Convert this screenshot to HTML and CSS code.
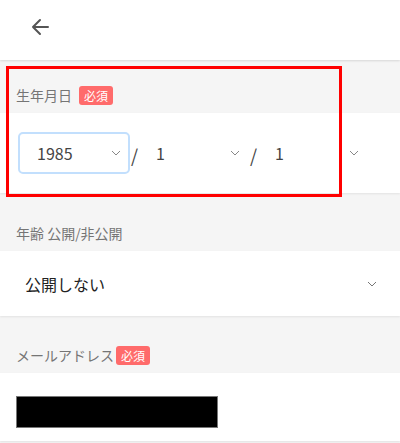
FILE: index.html
```html
<!DOCTYPE html>
<html lang="ja">
<head>
<meta charset="utf-8">
<link rel="stylesheet" href="styles.css">
</head>
<body>
<header class="header">
  <svg class="back" width="20" height="18" viewBox="0 0 20 18"><path d="M18 9H3M10 2L3 9l7 7" fill="none" stroke="#555" stroke-width="2" stroke-linecap="round" stroke-linejoin="round"/></svg>
</header>

<section class="field">
  <div class="label label-first">生年月日<span class="badge">必須</span></div>
  <div class="row row-date">
    <div class="sel sel-focus"><span>1985</span><svg class="chev" width="10" height="6" viewBox="0 0 10 6"><path d="M1 1l4 4 4-4" fill="none" stroke="#888" stroke-width="1"/></svg></div>
    <span class="slash">/</span>
    <div class="sel"><span>1</span><svg class="chev" width="10" height="6" viewBox="0 0 10 6"><path d="M1 1l4 4 4-4" fill="none" stroke="#888" stroke-width="1"/></svg></div>
    <span class="slash">/</span>
    <div class="sel"><span>1</span><svg class="chev" width="10" height="6" viewBox="0 0 10 6"><path d="M1 1l4 4 4-4" fill="none" stroke="#888" stroke-width="1"/></svg></div>
  </div>
  <div class="highlight"></div>
</section>

<section class="field">
  <div class="label label-second">年齢 公開/非公開</div>
  <div class="row row-select">
    <span class="value">公開しない</span>
    <svg class="chev" width="10" height="6" viewBox="0 0 10 6"><path d="M1 1l4 4 4-4" fill="none" stroke="#777" stroke-width="1"/></svg>
  </div>
</section>

<section class="field">
  <div class="label label-third">メールアドレス<span class="badge badge-tight">必須</span></div>
  <div class="row row-email">
    <div class="redact"></div>
  </div>
</section>
</body>
</html>
```

FILE: styles.css
```css
* { box-sizing: border-box; }
html, body { margin: 0; padding: 0; }
body {
  width: 400px;
  height: 443px;
  overflow: hidden;
  background: #f5f5f5;
  font-family: "Noto Sans CJK JP", "Noto Sans", sans-serif;
  position: relative;
}
.header {
  height: 60px;
  background: #fff;
  box-shadow: 0 1px 2px rgba(0,0,0,0.12);
  display: flex;
  align-items: center;
  padding-left: 30px;
  padding-bottom: 6px;
  position: relative;
  z-index: 1;
}
.back { display: block; }
.label {
  display: flex;
  align-items: center;
  padding: 0 16px 8px;
  font-size: 14px;
  line-height: 20px;
  height: 20px;
  color: #757575;
  box-sizing: content-box;
}
.label-first { padding-top: 25px; }
.label-second { padding-top: 30px; }
.label-third { padding-top: 29px; }
.badge {
  display: inline-block;
  margin-left: 7px;
  background: #ff6b6b;
  color: #fff;
  font-size: 12px;
  line-height: 19px;
  height: 19px;
  padding: 0 5px;
  border-radius: 3px;
}
.badge-tight { margin-left: 2px; }
.row {
  background: #fff;
  box-shadow: 0 1px 2px rgba(0,0,0,0.08);
}
.row-date {
  height: 80px;
  display: flex;
  align-items: center;
  padding-left: 18px;
}
.sel {
  width: 112px;
  height: 42px;
  display: flex;
  align-items: center;
  justify-content: space-between;
  padding: 0 7px 0 17px;
  border: 2px solid transparent;
  border-radius: 5px;
  font-size: 16px;
  color: #444;
}
.sel-focus { border-color: #c2dffd; }
.sel span { line-height: 20px; }
.slash {
  width: 6px;
  font-size: 18px;
  color: #444;
  margin: 3px 0 0 1px;
}
.row-select {
  height: 65px;
  display: flex;
  align-items: center;
  justify-content: space-between;
  padding: 0 23px 0 25px;
}
.value { font-size: 16px; color: #222; }
.chev { display: block; }
.row-email {
  height: 68px;
  padding: 23px 16px 0;
}
.redact {
  width: 202px;
  height: 32px;
  background: #000;
  border: 1px solid #777;
}
.field { position: relative; }
.highlight {
  position: absolute;
  left: 6px;
  top: 6px;
  width: 336px;
  height: 131px;
  border: 3px solid #ff0000;
  pointer-events: none;
}
```
